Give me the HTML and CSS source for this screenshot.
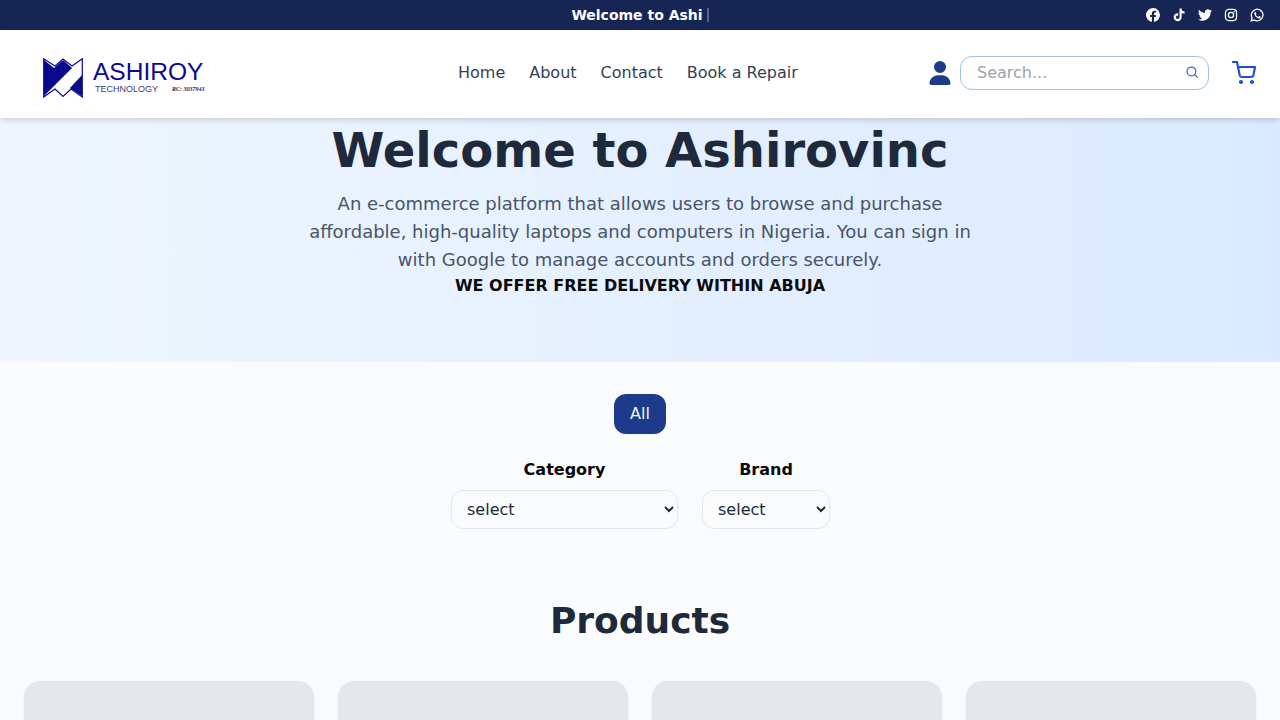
FILE: index.html
```html
<!DOCTYPE html>
<html lang="en">
<head>
  <meta charset="UTF-8" />
  <meta name="viewport" content="width=device-width, initial-scale=1.0"/>
  <title>Ashirovinc</title>
  <link rel="stylesheet" href="styles.css">
</head>
<body>

  <!-- Top bar -->
  <div class="topbar">
    <div class="topbar-text">Welcome to Ashi<span class="caret"></span></div>
    <div class="socials">
      <svg viewBox="0 0 24 24" class="social"><path fill="currentColor" d="M24 12a12 12 0 1 0-13.900 11.900v-8.400H7.100V12h3V9.400c0-3 1.800-4.700 4.500-4.700 1.300 0 2.700.2 2.700.2v3h-1.500c-1.500 0-2 .9-2 1.900V12h3.400l-.5 3.500h-2.900v8.400A12 12 0 0 0 24 12z"/></svg>
      <svg viewBox="0 0 24 24" class="social"><path fill="currentColor" d="M16.600 1h-3.700v14.900a3.100 3.100 0 1 1-3.100-3.200c.3 0 .6 0 .9.1V9a6.900 6.900 0 1 0 5.900 6.900V8.200a8.500 8.500 0 0 0 4.900 1.600V6.100a4.900 4.900 0 0 1-4.900-5.100z"/></svg>
      <svg viewBox="0 0 24 24" class="social"><path fill="currentColor" d="M24 4.600c-.9.400-1.800.7-2.800.8 1-.6 1.800-1.600 2.200-2.700-1 .6-2 1-3.100 1.200A4.900 4.900 0 0 0 11.900 8.400C7.800 8.200 4.200 6.200 1.700 3.200c-1.300 2.200-.7 5.100 1.500 6.600-.8 0-1.600-.2-2.200-.6 0 2.300 1.600 4.400 4 4.900-.7.200-1.500.2-2.200.1.600 2 2.500 3.400 4.600 3.400A9.900 9.900 0 0 1 0 19.600 14 14 0 0 0 21.500 7.100c1-.7 1.800-1.500 2.500-2.500z"/></svg>
      <svg viewBox="0 0 24 24" class="social"><rect x="2.500" y="2.500" width="19" height="19" rx="5.500" fill="none" stroke="currentColor" stroke-width="2.200"/><circle cx="12" cy="12" r="4.400" fill="none" stroke="currentColor" stroke-width="2.200"/><circle cx="17.500" cy="6.500" r="1.300" fill="currentColor"/></svg>
      <svg viewBox="0 0 24 24" class="social"><path fill="none" stroke="currentColor" stroke-width="2.200" d="M2 22l1.500-5.300A9.900 9.900 0 1 1 7.300 20.600L2 22z"/><path fill="currentColor" d="M9 7c-.4 0-1.600.8-1.600 2.500 0 1.700 1.200 3.300 1.400 3.600.2.200 2.300 3.600 5.700 4.800 2.100.7 3.300-.4 3.600-1.300.2-.8.200-1.500.1-1.600l-2.400-1.200c-.3-.1-.5-.1-.7.200l-.9 1.100c-.2.200-.4.200-.7.100a7.600 7.600 0 0 1-3.500-3.100c-.2-.3 0-.5.100-.6l.7-.9c.1-.2.1-.4 0-.6L9.700 7.300C9.500 7 9.300 7 9 7z"/></svg>
    </div>
  </div>

  <!-- Navbar -->
  <header class="navbar">
    <a class="logo" href="#">
      <svg class="logo-mark" viewBox="0 0 40 40">
        <path fill="#0a0a8c" d="M1 2l10 8L1 22zM11 10l9-8 9 8L1 38V22zM39 17v21l-12-8z"/>
        <path fill="none" stroke="#0a0a8c" stroke-width="1.200" d="M.7.7L12 8l8-7 9 7L39.300.7V39L28 31l-8 7.500L12 31 .7 39z"/>
      </svg>
      <div class="logo-text">
        <div class="logo-name">ASHIROY</div>
        <div class="logo-sub"><span>TECHNOLOGY</span><span class="logo-rc">RC: 3037943</span></div>
      </div>
    </a>

    <nav class="nav-links">
      <a href="#">Home</a>
      <a href="#">About</a>
      <a href="#">Contact</a>
      <a href="#">Book a Repair</a>
    </nav>

    <div class="nav-right">
      <svg class="user-icon" viewBox="0 0 448 512"><path fill="currentColor" d="M224 256a128 128 0 1 0 0-256 128 128 0 1 0 0 256zm-45.700 48C79.800 304 0 383.800 0 482.300 0 498.700 13.300 512 29.700 512h388.600c16.400 0 29.700-13.300 29.700-29.700C448 383.800 368.200 304 269.700 304h-91.400z"/></svg>
      <div class="search">
        <input type="text" placeholder="Search...">
        <svg class="search-icon" viewBox="0 0 24 24"><circle cx="11" cy="11" r="7.500" fill="none" stroke="currentColor" stroke-width="2.200"/><path d="M21 21l-4.500-4.500" fill="none" stroke="currentColor" stroke-width="2.200" stroke-linecap="round"/></svg>
      </div>
      <svg class="cart-icon" viewBox="0 0 24 24" fill="none" stroke="currentColor" stroke-width="2.200" stroke-linecap="round" stroke-linejoin="round"><circle cx="9" cy="21" r="1"/><circle cx="20" cy="21" r="1"/><path d="M1 1h4l2.700 13.400a2 2 0 0 0 2 1.600h9.700a2 2 0 0 0 2-1.600L23 6H6"/></svg>
    </div>
  </header>

  <!-- Hero -->
  <section class="hero">
    <h1>Welcome to Ashirovinc</h1>
    <p>An e-commerce platform that allows users to browse and purchase affordable, high-quality laptops and computers in Nigeria. You can sign in with Google to manage accounts and orders securely.</p>
    <div class="delivery">WE OFFER FREE DELIVERY WITHIN ABUJA</div>
  </section>

  <!-- Filters -->
  <main class="content">
    <div class="tabs">
      <button class="tab">All</button>
    </div>

    <div class="filters">
      <div class="filter">
        <label for="category">Category</label>
        <select id="category" class="select-category"><option>select</option></select>
      </div>
      <div class="filter">
        <label for="brand">Brand</label>
        <select id="brand" class="select-brand"><option>select</option></select>
      </div>
    </div>

    <h2>Products</h2>

    <div class="product-grid">
      <div class="product-card"></div>
      <div class="product-card"></div>
      <div class="product-card"></div>
      <div class="product-card"></div>
    </div>
  </main>

</body>
</html>
```

FILE: styles.css
```css
* {margin: 0;padding: 0;box-sizing: border-box;}

body {
  font-family: 'DejaVu Sans', sans-serif;
  background: #f9fbfd;
  color: #1e293b;
  overflow-x: hidden;
}

a {text-decoration: none;color: inherit;}

/* Top bar */
.topbar {
  position: relative;
  display: flex;
  align-items: center;
  justify-content: center;
  height: 30px;
  background-color: #172554;
  color: white;
}

.topbar-text {
  font-size: 14px;
  font-weight: bold;
  display: flex;
  align-items: center;
}

.caret {
  display: inline-block;
  width: 2px;
  height: 14px;
  margin-left: 4px;
  background: #56638a;
}

.socials {
  position: absolute;
  right: 16px;
  top: 8px;
  display: flex;
  gap: 12px;
}

.social {
  width: 14px;
  height: 14px;
}

/* Navbar */
.navbar {
  position: relative;
  z-index: 10;
  display: flex;
  align-items: center;
  justify-content: space-between;
  height: 88px;
  padding: 0 24px 2px 43px;
  background: white;
  box-shadow: 0 4px 6px -1px rgba(0, 0, 0, 0.1), 0 2px 4px -2px rgba(0, 0, 0, 0.1);
}

.logo {
  display: flex;
  align-items: center;
  gap: 10px;
  width: 162px;
  margin-top: 9px;
}

.logo-mark {
  width: 40px;
  height: 40px;
  flex-shrink: 0;
}

.logo-text {
  color: #0a0a8c;
}

.logo-name {
  font-family: 'Liberation Sans', sans-serif;
  font-size: 24.500px;
  line-height: 22px;
  margin-bottom: 2px;
  white-space: nowrap;
}

.logo-sub {
  display: flex;
  align-items: center;
  gap: 14px;
  margin-left: 2px;
  font-family: 'Liberation Sans', sans-serif;
  font-size: 9px;
  line-height: 9px;
  color: #3c3c80;
  white-space: nowrap;
}

.logo-rc {
  font-family: 'Liberation Serif', serif;
  font-size: 6px;
  font-weight: bold;
  font-style: italic;
  color: #1a1a50;
}

.nav-links {
  position: absolute;
  left: 458px;
  display: flex;
  gap: 24px;
  padding-bottom: 2px;
  font-size: 16px;
  color: #334155;
}

.nav-right {
  display: flex;
  align-items: center;
}

.user-icon {
  width: 22px;
  height: 24px;
  color: #1e3a8a;
  margin-right: 9px;
}

.search {
  position: relative;
  width: 249px;
  height: 34px;
  margin-right: 23px;
}

.search input {
  width: 100%;
  height: 100%;
  padding: 0 40px 2px 16px;
  font-family: inherit;
  font-size: 16px;
  color: #334155;
  border: 1px solid #9cc4e4;
  border-radius: 12px;
  outline: none;
  background: white;
}

.search input::placeholder {color: #9ca3af;}

.search-icon {
  position: absolute;
  right: 10px;
  top: 9px;
  width: 14px;
  height: 14px;
  color: #3b6fc4;
}

.cart-icon {
  width: 24px;
  height: 24px;
  color: #1d4ed8;
}

/* Hero */
.hero {
  height: 244px;
  padding-top: 4px;
  text-align: center;
  background: linear-gradient(to right, #eff6ff, #dbeafe);
}

.hero h1 {
  font-size: 48px;
  line-height: 56px;
  font-weight: bold;
  color: #1e293b;
  margin-bottom: 12px;
}

.hero p {
  width: 672px;
  margin: 0 auto;
  font-size: 18px;
  line-height: 28px;
  color: #475569;
}

.delivery {
  font-size: 16px;
  font-weight: bold;
  line-height: 24px;
  color: #0a0a0a;
}

/* Filters */
.content {
  padding: 32px 24px 40px;
}

.tabs {
  display: flex;
  justify-content: center;
  margin-bottom: 24px;
}

.tab {
  width: 52px;
  height: 40px;
  padding-bottom: 2px;
  font-family: inherit;
  font-size: 16px;
  color: #eff6ff;
  background-color: #1e3a8a;
  border: none;
  border-radius: 12px;
  cursor: pointer;
}

.filters {
  display: flex;
  justify-content: center;
  gap: 24px;
  margin-left: 1px;
  margin-bottom: 72px;
}

.filter {
  display: flex;
  flex-direction: column;
  align-items: center;
  gap: 8px;
}

.filter label {
  font-size: 16px;
  line-height: 24px;
  font-weight: bold;
  color: #0a0a0a;
}

.filter select {
  height: 39px;
  padding: 0 8px 0 11px;
  font-family: inherit;
  font-size: 16px;
  color: #1e293b;
  background-color: #f9fbfd;
  border: 1px solid #e5e7eb;
  border-radius: 12px;
}

.select-category {width: 227px;}
.select-brand {width: 128px;}

.content h2 {
  font-size: 36px;
  line-height: 40px;
  font-weight: bold;
  text-align: center;
  color: #1e293b;
  margin-bottom: 40px;
}

.product-grid {
  display: grid;
  grid-template-columns: repeat(4, 1fr);
  gap: 24px;
}

.product-card {
  height: 320px;
  background: #e5e7eb;
  border-radius: 16px;
  box-shadow: 0 1px 3px rgba(0, 0, 0, 0.06);
}
```
